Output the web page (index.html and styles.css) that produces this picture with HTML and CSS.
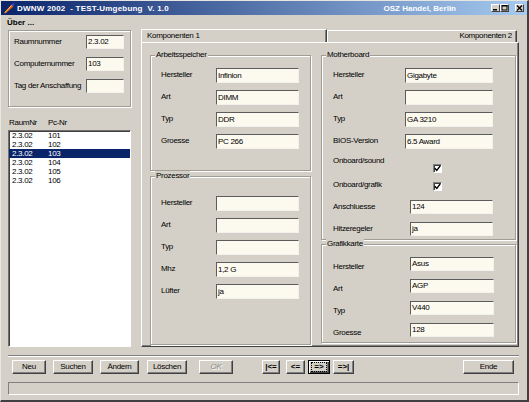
FILE: index.html
```html
<!DOCTYPE html>
<html lang="de">
<head>
<meta charset="utf-8">
<title>DWNW 2002</title>
<link rel="stylesheet" href="styles.css">
</head>
<body>
<div class="window">
  <div class="titlebar">
    <svg class="appicon" width="12" height="12" viewBox="0 0 12 12">
      <path d="M1 11 L8.5 2.5 L10.5 4.5 L2.5 11.5 Z" fill="#e4571b"/>
      <path d="M2 10.5 L8.5 3.5" stroke="#ffd34a" stroke-width="1"/>
      <path d="M8.5 2.5 L11 0.5 L11.5 1 L10.5 4.5 Z" fill="#2a48d0"/>
    </svg>
    <span class="title">DWNW 2002  - TEST-Umgebung  V. 1.0</span>
    <span class="title-right">OSZ Handel, Berlin</span>
    <div class="winbtns">
      <span class="wb"><svg width="7" height="6" viewBox="0 0 7 6"><rect x="1" y="4" width="4" height="1.5" fill="#000"/></svg></span>
      <span class="wb wb-max"><svg width="7" height="6" viewBox="0 0 7 6"><rect x="1" y="0.5" width="5" height="4.5" fill="none" stroke="#000" stroke-width="1"/><rect x="1" y="0" width="5.5" height="1.5" fill="#000"/></svg></span>
      <span class="wb"><svg width="7" height="6" viewBox="0 0 7 6"><path d="M1 0.5 L6 5.5 M6 0.5 L1 5.5" stroke="#000" stroke-width="1.3"/></svg></span>
    </div>
  </div>
  <div class="menubar"><span class="menu">Über ...</span></div>
  <div class="main">
    <div class="leftcol">
      <div class="idbox">
        <div class="row idrow"><span class="lbl">Raumnummer</span><span class="field">2.3.02</span></div>
        <div class="row idrow"><span class="lbl">Computernummer</span><span class="field">103</span></div>
        <div class="row idrow"><span class="lbl">Tag der Anschaffung</span><span class="field"></span></div>
      </div>
      <div class="listhead"><span class="hc1">RaumNr</span><span>Pc-Nr</span></div>
      <div class="listbox">
        <div class="li"><span class="lc1">2.3.02</span><span>101</span></div>
        <div class="li"><span class="lc1">2.3.02</span><span>102</span></div>
        <div class="li sel"><span class="lc1">2.3.02</span><span>103</span></div>
        <div class="li"><span class="lc1">2.3.02</span><span>104</span></div>
        <div class="li"><span class="lc1">2.3.02</span><span>105</span></div>
        <div class="li"><span class="lc1">2.3.02</span><span>106</span></div>
      </div>
    </div>
    <div class="tabctl">
      <div class="tabrow">
        <div class="tab tab-active">Komponenten 1</div>
        <div class="tab tab-second">Komponenten 2</div>
      </div>
      <div class="panel">
        <div class="pcol pcol-left">
          <div class="grp grp-left grp-ram">
            <span class="legend">Arbeitsspeicher</span>
            <div class="rows">
              <div class="row"><span class="lbl">Hersteller</span><span class="field">Infinion</span></div>
              <div class="row"><span class="lbl">Art</span><span class="field">DIMM</span></div>
              <div class="row"><span class="lbl">Typ</span><span class="field">DDR</span></div>
              <div class="row"><span class="lbl">Groesse</span><span class="field">PC 266</span></div>
            </div>
          </div>
          <div class="grp grp-left grp-cpu">
            <span class="legend">Prozessor</span>
            <div class="rows">
              <div class="row"><span class="lbl">Hersteller</span><span class="field"></span></div>
              <div class="row"><span class="lbl">Art</span><span class="field"></span></div>
              <div class="row"><span class="lbl">Typ</span><span class="field"></span></div>
              <div class="row"><span class="lbl">Mhz</span><span class="field">1,2 G</span></div>
              <div class="row"><span class="lbl">Lüfter</span><span class="field">ja</span></div>
            </div>
          </div>
        </div>
        <div class="pcol pcol-right">
          <div class="grp grp-right grp-mb">
            <span class="legend">Motherboard</span>
            <div class="rows">
              <div class="row"><span class="lbl">Hersteller</span><span class="field">Gigabyte</span></div>
              <div class="row"><span class="lbl">Art</span><span class="field"></span></div>
              <div class="row"><span class="lbl">Typ</span><span class="field">GA 3210</span></div>
              <div class="row"><span class="lbl">BIOS-Version</span><span class="field">6.5 Award</span></div>
              <div class="row row-chk"><span class="lbl lbl-up">Onboard/sound</span><span class="chk chk-sound"><svg width="7" height="7" viewBox="0 0 7 7"><path d="M0.8 3.2 L2.8 5.5 L6.2 0.8" fill="none" stroke="#000" stroke-width="1.4"/></svg></span></div>
              <div class="row row-chk"><span class="lbl">Onboard/grafik</span><span class="chk chk-grafik"><svg width="7" height="7" viewBox="0 0 7 7"><path d="M0.8 3.2 L2.8 5.5 L6.2 0.8" fill="none" stroke="#000" stroke-width="1.4"/></svg></span></div>
              <div class="row row-wide"><span class="lbl">Anschluesse</span><span class="field">124</span></div>
              <div class="row row-wide"><span class="lbl">Hitzeregeler</span><span class="field">ja</span></div>
            </div>
          </div>
          <div class="grp grp-right grp-gfx">
            <span class="legend">Grafikkarte</span>
            <div class="rows">
              <div class="row"><span class="lbl">Hersteller</span><span class="field">Asus</span></div>
              <div class="row"><span class="lbl">Art</span><span class="field">AGP</span></div>
              <div class="row"><span class="lbl">Typ</span><span class="field">V440</span></div>
              <div class="row"><span class="lbl">Groesse</span><span class="field">128</span></div>
            </div>
          </div>
        </div>
      </div>
    </div>
  </div>
  <div class="toolbar">
    <span class="btn b-neu">Neu</span>
    <span class="btn b-suchen">Suchen</span>
    <span class="btn b-aendern">Ändern</span>
    <span class="btn b-loeschen">Löschen</span>
    <span class="btn b-ok">OK</span>
    <span class="btn nav b-first">|&lt;=</span>
    <span class="btn nav b-prev">&lt;=</span>
    <span class="btn nav b-next"><span class="focus">=&gt;</span></span>
    <span class="btn nav b-last">=&gt;|</span>
    <span class="btn b-ende">Ende</span>
  </div>
  <div class="statusbar"></div>
</div>
</body>
</html>
```

FILE: styles.css
```css
* { box-sizing: border-box; margin: 0; padding: 0; }
html, body { background: #d4d0c8; }
body {
  margin: 0;
  font-family: "Liberation Sans", Arial, sans-serif;
  font-size: 8px;
  letter-spacing: -0.3px;
  line-height: 1.1;
  color: #000;
}
.window {
  width: 529px;
  height: 402px;
  background: #d4d0c8;
  border-top: 1px solid #e8e6e1;
  border-left: 1px solid #e8e6e1;
  border-right: 2px solid #404040;
  border-bottom: 2px solid #404040;
  display: flex;
  flex-direction: column;
  overflow: hidden;
}
.titlebar {
  flex: none;
  height: 14px;
  display: flex;
  align-items: center;
  padding: 0 3px 0 2px;
  background: linear-gradient(to right, #0a246a 0%, #a6caf0 100%);
  color: #fff;
  font: bold 8px "Liberation Sans", Arial, sans-serif;
  letter-spacing: 0;
  white-space: pre;
}
.appicon { flex: none; margin-right: 2px; }
.title { letter-spacing: 0.2px; }
.title-right { margin-left: auto; margin-right: 35px; }
.winbtns { display: flex; align-items: center; }
.wb {
  width: 9px;
  height: 8px;
  background: #d4d0c8;
  border: 1px solid;
  border-color: #fff #404040 #404040 #fff;
  display: flex;
  align-items: center;
  justify-content: center;
}
.wb-max { margin-right: 6px; }
.menubar {
  flex: none;
  height: 14px;
  display: flex;
  align-items: center;
  padding-left: 6px;
  font: bold 8px "Liberation Sans", Arial, sans-serif;
  letter-spacing: 0;
}
.main {
  flex: none;
  height: 319px;
  display: flex;
  padding-left: 7px;
}
.leftcol { width: 123px; display: flex; flex-direction: column; flex: none; }
.idbox {
  margin-top: 1px;
  height: 77px;
  border: 1px solid #a09d96;
  box-shadow: inset 1px 1px 0 #fff, 1px 1px 0 #fff;
  padding-left: 5px;
}
.row { display: flex; align-items: center; height: 22px; flex: none; }
.lbl { flex: none; white-space: nowrap; }
.idrow .lbl { width: 72px; }
.field {
  display: block;
  flex: none;
  height: 15px;
  background: #fcf9ef;
  border: 1px solid;
  border-color: #5c5c5c #f4f2ee #f4f2ee #5c5c5c;
  padding-left: 1px;
  line-height: 13px;
  white-space: nowrap;
  overflow: hidden;
}
.idrow .field { width: 38px; height: 14px; line-height: 12px; }
.listhead {
  margin-top: 10px;
  height: 12px;
  display: flex;
  align-items: center;
  padding-left: 1px;
}
.hc1 { width: 39px; }
.listbox {
  margin-top: 1px;
  height: 217px;
  background: #fff;
  border: 1px solid;
  border-color: #707070 #fff #fff #707070;
  box-shadow: inset 1px 1px 0 #404040;
}
.li { height: 9px; display: flex; align-items: center; padding-left: 3px; line-height: 9px; }
.lc1 { width: 36px; }
.li.sel { background: #0a246a; color: #fff; }

.tabctl { margin-left: 10px; width: 378px; display: flex; flex-direction: column; flex: none; }
.tabrow { flex: none; height: 13px; display: flex; align-items: flex-end; }
.tab {
  background: #d4d0c8;
  border-top: 1px solid #fff;
  border-left: 1px solid #fff;
  border-right: 1px solid #404040;
  box-shadow: inset -1px 0 0 #808080;
  display: flex;
  align-items: center;
  flex: none;
}
.tab-active { width: 186px; height: 13px; padding-left: 5px; }
.tab-second { width: 190px; height: 12px; justify-content: flex-end; padding-right: 4px; }
.panel {
  flex: none;
  height: 305px;
  border: 1px solid;
  border-color: #fff #404040 #404040 #fff;
  box-shadow: inset -1px -1px 0 #808080;
  display: flex;
  gap: 10px;
  padding: 12px 0 0 8px;
}
.pcol { display: flex; flex-direction: column; flex: none; }
.pcol-left { width: 161px; gap: 5px; }
.pcol-right { width: 195px; gap: 4px; }
.grp {
  flex: none;
  border: 1px solid #a09d96;
  box-shadow: inset 1px 1px 0 #fff, 1px 1px 0 #fff;
  display: flex;
  flex-direction: column;
}
.legend {
  align-self: flex-start;
  height: 10px;
  line-height: 10px;
  margin: -6px 0 0 4px;
  padding: 0 1px;
  background: #d4d0c8;
}
.grp-ram { height: 116px; }
.grp-cpu { height: 169px; }
.grp-mb { height: 185px; }
.grp-gfx { height: 99px; }
.rows { margin-top: 4px; display: flex; flex-direction: column; }
.grp-cpu .rows { margin-top: 11px; }
.grp-left .row { padding-left: 10px; }
.grp-left .lbl { width: 55px; }
.grp-left .field { width: 83px; }
.grp-right .row { padding-left: 11px; }
.grp-mb .lbl { width: 72px; }
.grp-mb .field { width: 88px; }
.grp-mb .row-wide .lbl { width: 77px; }
.grp-mb .row-wide .field { width: 83px; height: 14px; line-height: 12px; }
.grp-mb .row-chk .lbl { width: 100px; }
.lbl-up { margin-bottom: 3px; }
.chk {
  flex: none;
  width: 9px;
  height: 9px;
  background: #fff;
  border: 1px solid;
  border-color: #808080 #fff #fff #808080;
  box-shadow: inset 1px 1px 0 #404040;
  display: flex;
  align-items: center;
  justify-content: center;
}
.chk-sound { margin-top: 10px; }
.chk-grafik { margin-top: 3px; }
.grp-gfx .lbl { width: 77px; margin-top: 6px; }
.grp-gfx .field { width: 84px; height: 14px; line-height: 12px; }

.toolbar {
  flex: none;
  margin: 7px 0 0 7px;
  width: 511px;
  height: 19px;
  border-top: 1px solid #808080;
  box-shadow: inset 0 1px 0 #fff;
  display: flex;
  align-items: flex-start;
  padding: 4px 0 0 4px;
}
.btn {
  flex: none;
  height: 14px;
  display: flex;
  align-items: center;
  justify-content: center;
  background: #d4d0c8;
  border: 1px solid;
  border-color: #fff #404040 #404040 #fff;
  box-shadow: inset -1px -1px 0 #808080;
  white-space: nowrap;
}
.nav { font-weight: bold; letter-spacing: 0; }
.b-neu { width: 34px; }
.b-suchen { width: 40px; margin-left: 7px; }
.b-aendern { width: 39px; margin-left: 7px; }
.b-loeschen { width: 40px; margin-left: 8px; }
.b-ok { width: 34px; margin-left: 12px; color: #8a8a8a; font-style: italic; text-shadow: 1px 1px 0 #fff; }
.b-first { width: 18px; margin-left: 29px; }
.b-prev { width: 19px; margin-left: 6px; }
.b-next {
  width: 22px;
  margin-left: 3px;
  border-color: #000;
  box-shadow: inset 1px 1px 0 #fff, inset -1px -1px 0 #404040, inset -2px -2px 0 #808080;
}
.focus { display: block; border: 1px dotted #000; padding: 0 2px; line-height: 8px; }
.b-last { width: 21px; margin-left: 3px; }
.b-ende { width: 51px; margin-left: 109px; }
.statusbar {
  flex: none;
  margin: 8px 0 0 7px;
  width: 511px;
  height: 13px;
  border: 1px solid;
  border-color: #808080 #fff #fff #808080;
}
```
